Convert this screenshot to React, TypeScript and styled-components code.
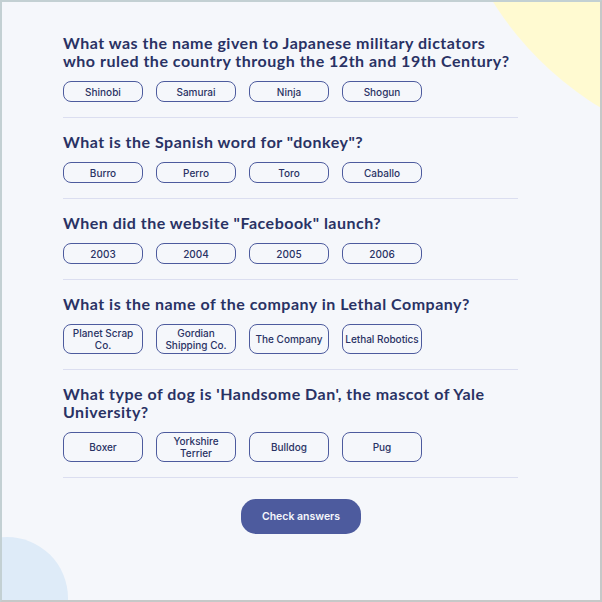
import React from "react";
import styled, { createGlobalStyle } from "styled-components";

const Global = createGlobalStyle`
  html, body { margin: 0; padding: 0; background: #f5f7fb; }
  * { box-sizing: border-box; }
`;

const Page = styled.div`
  position: relative;
  width: 602px;
  height: 602px;
  overflow: hidden;
  background: #f5f7fb;
  border: 2px solid #c3d0d3;
  border-right-color: #c6c8c8;
  border-bottom-color: #c6c8c8;
`;

const Blob = styled.div<{ $color: string; $size: number; $x: number; $y: number }>`
  position: absolute;
  width: ${(p) => p.$size}px;
  height: ${(p) => p.$size}px;
  left: ${(p) => p.$x - p.$size / 2}px;
  top: ${(p) => p.$y - p.$size / 2}px;
  border-radius: 50%;
  background: ${(p) => p.$color};
`;

const Content = styled.main`
  position: relative;
  display: flex;
  flex-direction: column;
  padding: 32px 0 0 61px;
`;

const Quiz = styled.div`
  width: 455px;
  display: flex;
  flex-direction: column;
`;

const Question = styled.section`
  display: flex;
  flex-direction: column;
  padding: 0 0 15px;
  margin-bottom: 15px;
  border-bottom: 1px solid #dbdef0;
`;

const Title = styled.h2`
  margin: 0 0 11px;
  font-family: "Lato", sans-serif;
  font-weight: 700;
  font-size: 16px;
  line-height: 18px;
  letter-spacing: 0.5px;
  color: #293264;
`;

const Answers = styled.div`
  display: flex;
  gap: 13px;
`;

const Answer = styled.button`
  width: 80px;
  min-height: 21px;
  padding: 2px 0;
  display: flex;
  align-items: center;
  justify-content: center;
  background: transparent;
  border: 1px solid #4d5b9e;
  border-radius: 8px;
  font-family: "Inter", sans-serif;
  font-weight: 500;
  font-size: 10px;
  line-height: 12px;
  color: #293264;
  text-align: center;
  white-space: normal;
`;

const Footer = styled.div`
  display: flex;
  justify-content: center;
  width: 598px;
  margin-left: -61px;
  padding-top: 6px;
`;

const Check = styled.button`
  width: 120px;
  height: 35px;
  border: none;
  border-radius: 15px;
  background: #4d5b9e;
  color: #f5f7fb;
  font-family: "Inter", sans-serif;
  font-weight: 600;
  font-size: 10.5px;
`;

const questions = [
  {
    q: "What was the name given to Japanese military dictators who ruled the country through the 12th and 19th Century?",
    a: ["Shinobi", "Samurai", "Ninja", "Shogun"],
  },
  { q: 'What is the Spanish word for "donkey"?', a: ["Burro", "Perro", "Toro", "Caballo"] },
  { q: 'When did the website "Facebook" launch?', a: ["2003", "2004", "2005", "2006"] },
  {
    q: "What is the name of the company in Lethal Company?",
    a: ["Planet Scrap Co.", "Gordian Shipping Co.", "The Company", "Lethal Robotics"],
  },
  {
    q: "What type of dog is 'Handsome Dan', the mascot of Yale University?",
    a: ["Boxer", "Yorkshire Terrier", "Bulldog", "Pug"],
  },
];

export default function App() {
  return (
    <>
      <Global />
      <Page>
        <Blob $color="#fffad1" $size={654} $x={768} $y={-174} />
        <Blob $color="#deebf8" $size={122} $x={5} $y={596} />
        <Content>
          <Quiz>
            {questions.map((item) => (
              <Question key={item.q}>
                <Title>{item.q}</Title>
                <Answers>
                  {item.a.map((ans) => (
                    <Answer key={ans}>{ans}</Answer>
                  ))}
                </Answers>
              </Question>
            ))}
          </Quiz>
          <Footer>
            <Check>Check answers</Check>
          </Footer>
        </Content>
      </Page>
    </>
  );
}
